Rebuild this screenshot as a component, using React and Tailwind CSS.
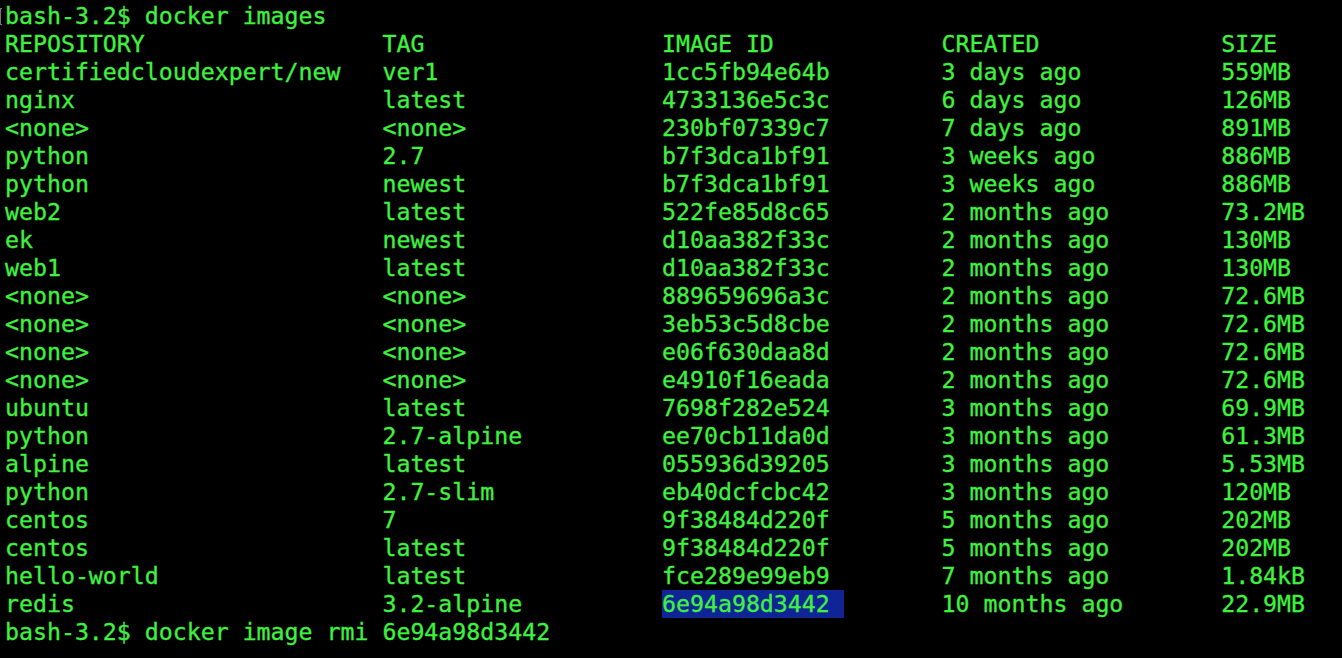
import React from 'react';

// Terminal output: `docker images`
const rows = [
  ['REPOSITORY', 'TAG', 'IMAGE ID', 'CREATED', 'SIZE'],
  ['certifiedcloudexpert/new', 'ver1', '1cc5fb94e64b', '3 days ago', '559MB'],
  ['nginx', 'latest', '4733136e5c3c', '6 days ago', '126MB'],
  ['<none>', '<none>', '230bf07339c7', '7 days ago', '891MB'],
  ['python', '2.7', 'b7f3dca1bf91', '3 weeks ago', '886MB'],
  ['python', 'newest', 'b7f3dca1bf91', '3 weeks ago', '886MB'],
  ['web2', 'latest', '522fe85d8c65', '2 months ago', '73.2MB'],
  ['ek', 'newest', 'd10aa382f33c', '2 months ago', '130MB'],
  ['web1', 'latest', 'd10aa382f33c', '2 months ago', '130MB'],
  ['<none>', '<none>', '889659696a3c', '2 months ago', '72.6MB'],
  ['<none>', '<none>', '3eb53c5d8cbe', '2 months ago', '72.6MB'],
  ['<none>', '<none>', 'e06f630daa8d', '2 months ago', '72.6MB'],
  ['<none>', '<none>', 'e4910f16eada', '2 months ago', '72.6MB'],
  ['ubuntu', 'latest', '7698f282e524', '3 months ago', '69.9MB'],
  ['python', '2.7-alpine', 'ee70cb11da0d', '3 months ago', '61.3MB'],
  ['alpine', 'latest', '055936d39205', '3 months ago', '5.53MB'],
  ['python', '2.7-slim', 'eb40dcfcbc42', '3 months ago', '120MB'],
  ['centos', '7', '9f38484d220f', '5 months ago', '202MB'],
  ['centos', 'latest', '9f38484d220f', '5 months ago', '202MB'],
  ['hello-world', 'latest', 'fce289e99eb9', '7 months ago', '1.84kB'],
  ['redis', '3.2-alpine', '6e94a98d3442', '10 months ago', '22.9MB'],
];

const widths = [27, 20, 20, 20];

const Row = ({ cols, selected }) => (
  <div className="h-[28px] whitespace-pre">
    {cols[0].padEnd(widths[0])}
    {cols[1].padEnd(widths[1])}
    {selected ? (
      <>
        <span className="inline-block h-[28px] bg-[#0f2596] align-top">{cols[2] + ' '}</span>
        {''.padEnd(widths[2] - 13)}
      </>
    ) : (
      cols[2].padEnd(widths[2])
    )}
    {cols[3].padEnd(widths[3])}
    {cols[4]}
  </div>
);

export default function App() {
  return (
    <div className="relative w-[1342px] h-[658px] overflow-hidden bg-black text-[#3ff23f] font-['DejaVu_Sans_Mono',monospace] text-[23.23px] leading-[28px] pt-[2px] pl-[5px] [-webkit-text-stroke:0.3px_#3ff23f]">
      {/* cursor remnant at the left edge */}
      <div className="absolute left-0 top-[8px] w-[2px] h-[17px] border-y border-l border-[#777]" />
      <div className="h-[28px] whitespace-pre">bash-3.2$ docker images</div>
      {rows.map((r, i) => (
        <Row key={i} cols={r} selected={i === rows.length - 1} />
      ))}
      <div className="h-[28px] whitespace-pre">bash-3.2$ docker image rmi 6e94a98d3442</div>
    </div>
  );
}
